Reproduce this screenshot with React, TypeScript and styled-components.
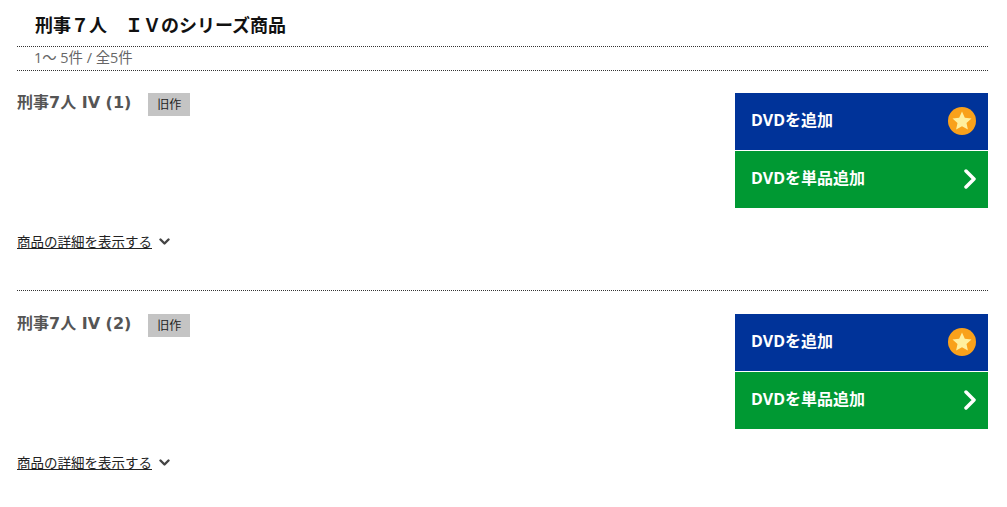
import styled, { createGlobalStyle } from "styled-components";

const items = ["刑事7人 IV (1)", "刑事7人 IV (2)"];

export default function App() {
	return (
		<>
			<GlobalStyle />
			<Page>
				<Title>刑事７人　ＩＶのシリーズ商品</Title>
				<Count>1～ 5件 / 全5件</Count>
				<List>
					{items.map(name => (
						<Item key={name}>
							<ItemTop>
								<NameRow>
									<Name>{name}</Name>
									<Badge>旧作</Badge>
								</NameRow>
								<Actions>
									<ActionButton $color="#003399">
										<ButtonLabel>DVDを追加</ButtonLabel>
										<StarIcon />
									</ActionButton>
									<ActionButton $color="#009933">
										<ButtonLabel>DVDを単品追加</ButtonLabel>
										<ChevronRight />
									</ActionButton>
								</Actions>
							</ItemTop>
							<DetailRow>
								<DetailLink href="#">商品の詳細を表示する</DetailLink>
								<ChevronDown />
							</DetailRow>
						</Item>
					))}
				</List>
			</Page>
		</>
	);
}

function StarIcon() {
	return (
		<svg width="28" height="28" viewBox="0 0 28 28" aria-hidden="true">
			<circle cx="14" cy="14" r="14" fill="#f9a11b" />
			<path
				d="M14 4.6l2.8 6.2 6.7.7-5 4.5 1.4 6.6-5.9-3.4-5.9 3.4 1.4-6.6-5-4.5 6.7-.7z"
				fill="#ffef9e"
			/>
		</svg>
	);
}

function ChevronRight() {
	return (
		<svg width="12" height="20" viewBox="0 0 12 20" aria-hidden="true">
			<path d="M2 2l8 8-8 8" fill="none" stroke="#fff" strokeWidth="3.5" strokeLinecap="round" strokeLinejoin="round" />
		</svg>
	);
}

function ChevronDown() {
	return (
		<svg width="11" height="8" viewBox="0 0 11 8" aria-hidden="true">
			<path d="M1.5 1.5l4 4 4-4" fill="none" stroke="#444" strokeWidth="2.4" strokeLinecap="round" strokeLinejoin="round" />
		</svg>
	);
}

const GlobalStyle = createGlobalStyle`
	body {
		margin: 0;
		background: #fff;
		font-family: "Open Sans", "Noto Sans CJK JP", sans-serif;
		color: #333;
	}
`;

const Page = styled.div`
	padding: 0 19px 0 17px;
`;

const Title = styled.h2`
	margin: 0;
	height: 47px;
	box-sizing: border-box;
	padding: 13px 0 0 18px;
	font-size: 18px;
	line-height: 24px;
	font-weight: 700;
	color: #111;
	border-bottom: 1px dotted #333;
`;

const Count = styled.div`
	height: 24px;
	box-sizing: border-box;
	padding-left: 17px;
	font-size: 14.4px;
	line-height: 22px;
	color: #666;
	border-bottom: 1px dotted #333;
`;

const List = styled.div`
	padding-top: 22px;
`;

const Item = styled.section`
	height: 197px;
	margin-bottom: 23px;
	border-bottom: 1px dotted #333;

	&:last-child {
		height: auto;
		margin-bottom: 0;
		border-bottom: none;
	}
`;

const ItemTop = styled.div`
	display: flex;
	justify-content: space-between;
	align-items: flex-start;
`;

const NameRow = styled.div`
	display: flex;
	align-items: flex-start;
	gap: 17px;
`;

const Name = styled.h3`
	margin: 0;
	font-family: "DejaVu Sans", "Noto Sans CJK JP", sans-serif;
	font-size: 16px;
	line-height: 20px;
	font-weight: 700;
	color: #555;
`;

const Badge = styled.span`
	width: 42px;
	height: 23px;
	background: #c4c4c4;
	color: #222;
	font-size: 12px;
	line-height: 23px;
	text-align: center;
`;

const Actions = styled.div`
	display: flex;
	flex-direction: column;
	gap: 1px;
	width: 253px;
`;

const ActionButton = styled.button<{ $color: string }>`
	display: flex;
	align-items: center;
	justify-content: space-between;
	height: 57px;
	padding: 0 12px 2px 16px;
	border: none;
	background: ${props => props.$color};
	color: #fff;
	font-family: inherit;
	font-size: 16px;
	font-weight: 700;
	cursor: pointer;
`;

const ButtonLabel = styled.span`
	margin-bottom: 4px;
`;

const DetailRow = styled.div`
	display: flex;
	align-items: center;
	gap: 7px;
	margin-top: 24px;
	height: 20px;
`;

const DetailLink = styled.a`
	font-size: 13.5px;
	line-height: 20px;
	color: #222;
	text-decoration: underline;
`;
